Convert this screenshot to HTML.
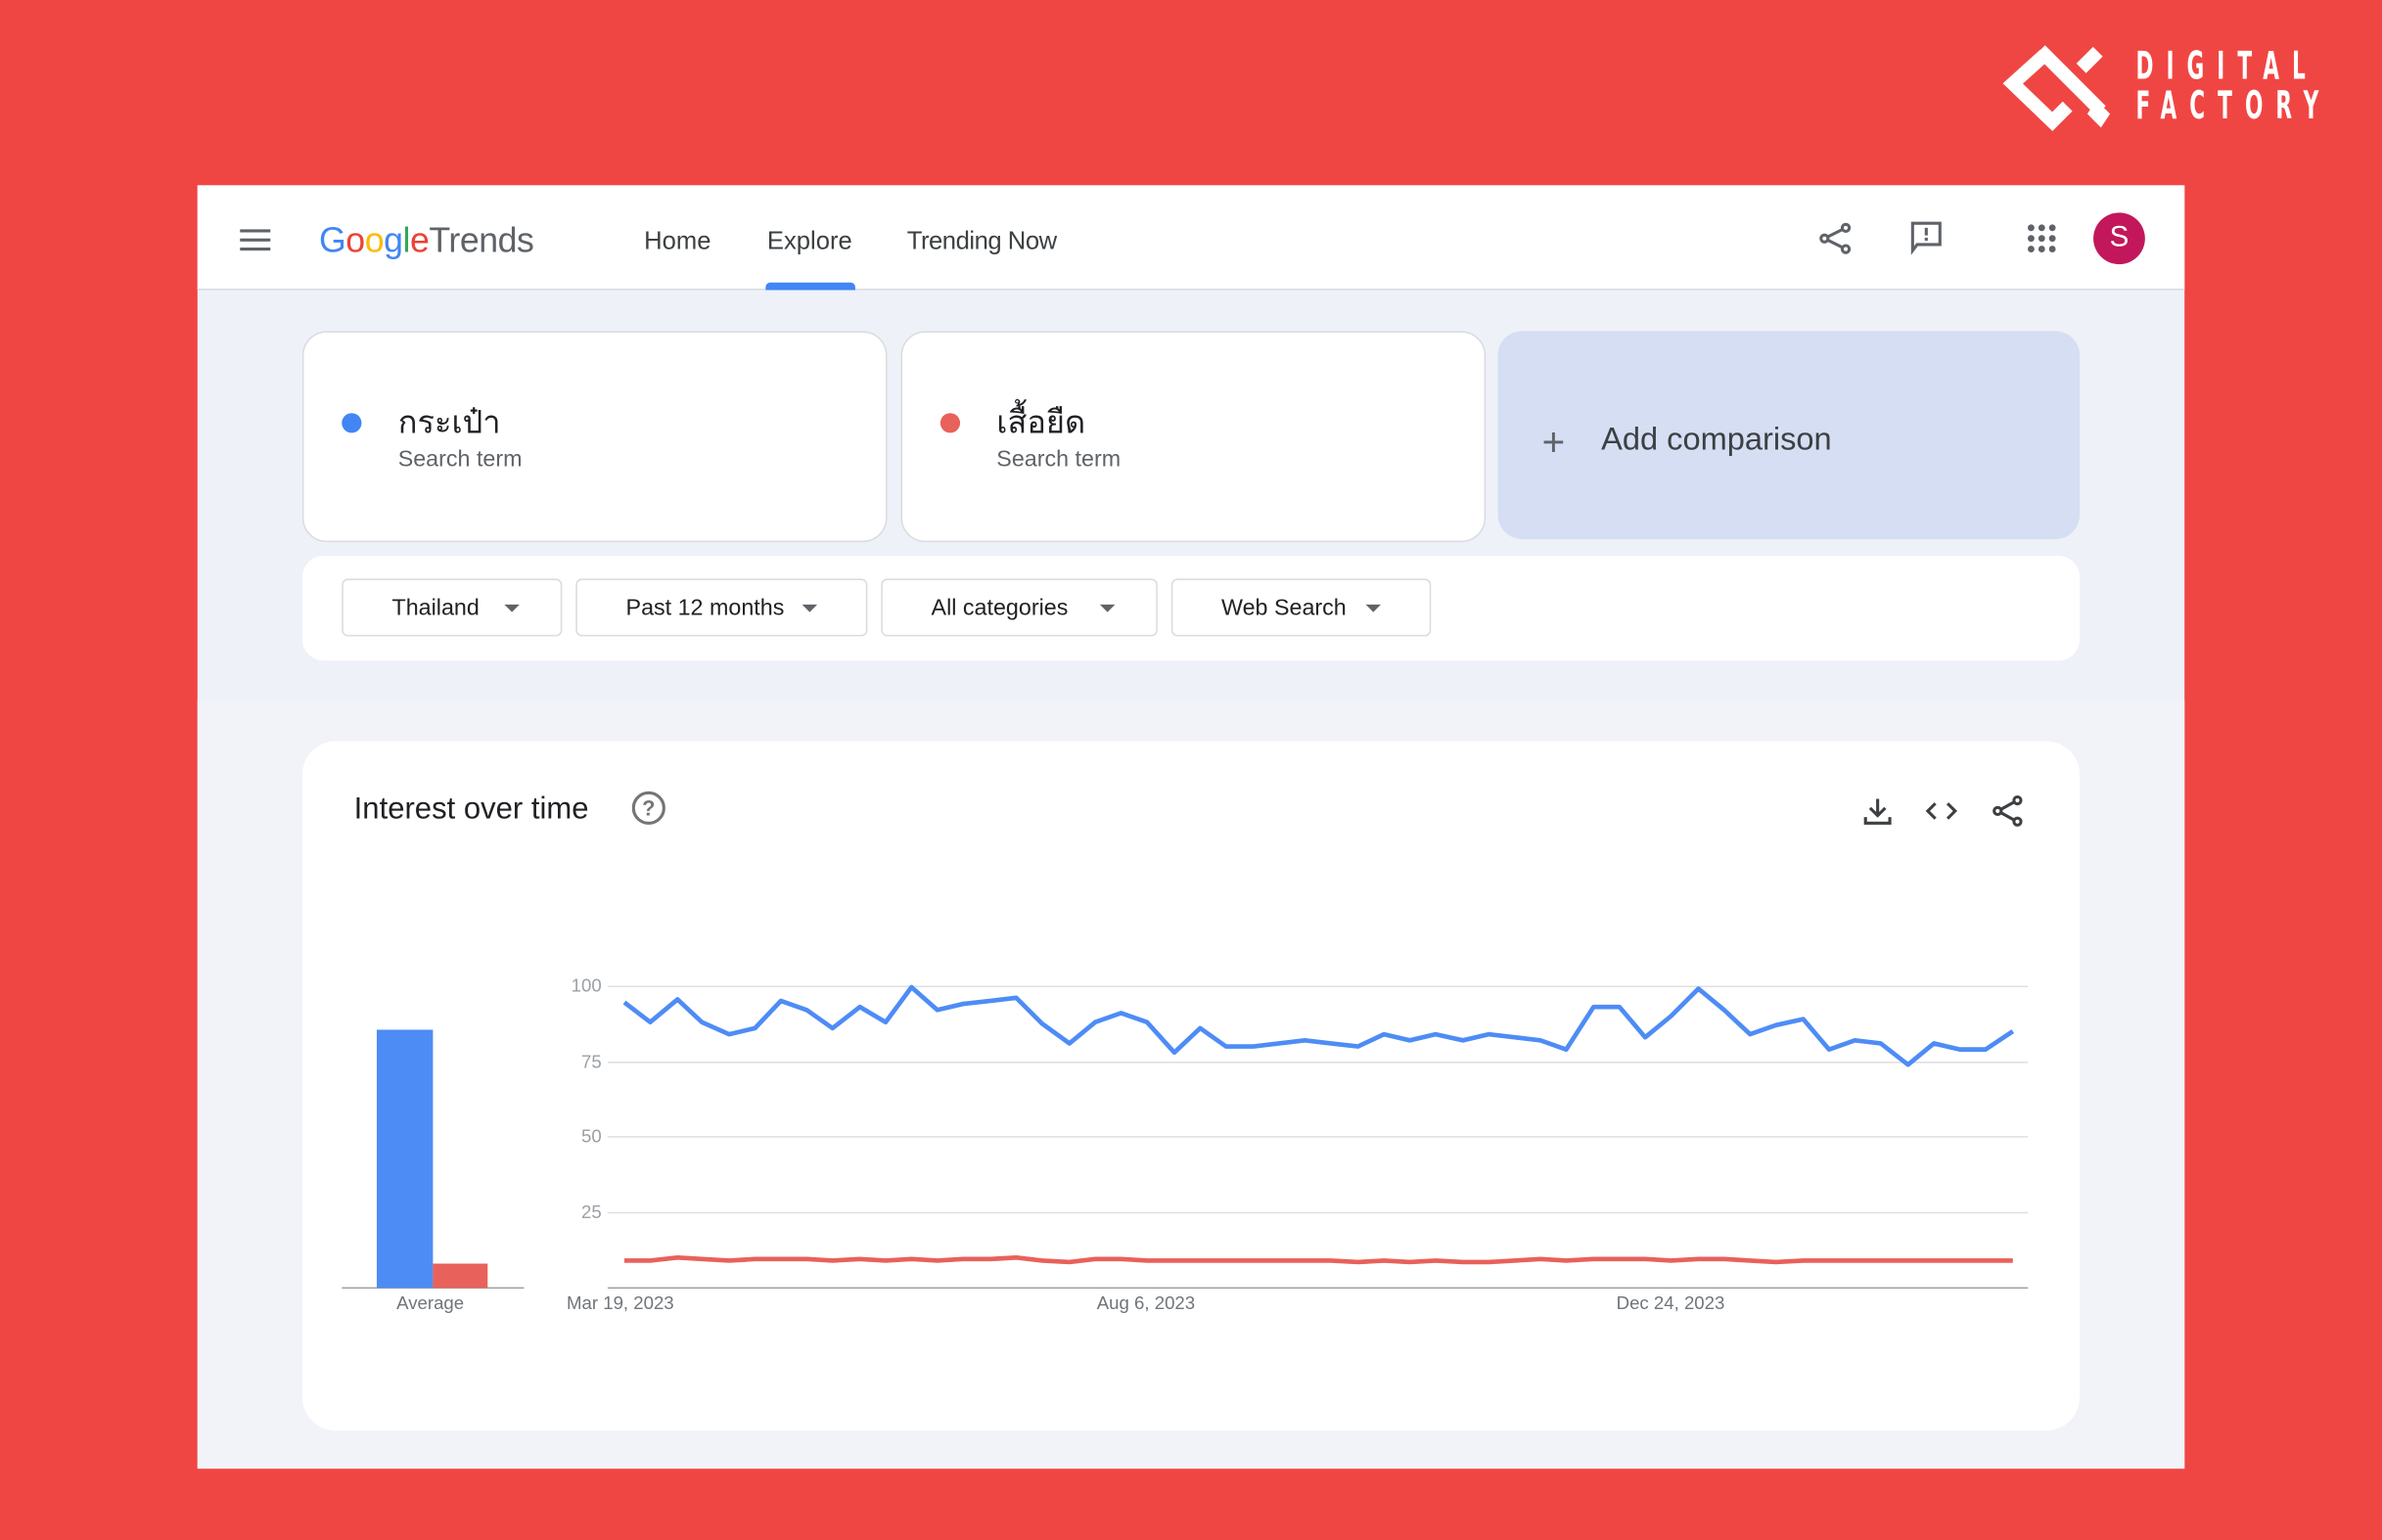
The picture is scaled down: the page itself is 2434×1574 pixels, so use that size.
<!DOCTYPE html>
<html><head><meta charset="utf-8"><style>
html,body{margin:0;padding:0;width:2434px;height:1574px;overflow:hidden;background:#f04643}
#s{position:absolute;left:0;top:0;width:1568px;height:1014px;transform:scale(1.55230);transform-origin:0 0;font-family:"Liberation Sans","Noto Sans CJK SC",sans-serif}
.a{position:absolute}
.card{position:absolute;background:#fff;border-radius:16px;border:1px solid #dadce0;box-sizing:border-box}
.dd{position:absolute;top:381px;height:38px;border:1px solid #dadce0;border-radius:4px;background:#fff;box-sizing:border-box;font-size:15px;color:#202124;line-height:38px}
.dd i{position:absolute;top:16px;width:0;height:0;border-left:5px solid transparent;border-right:5px solid transparent;border-top:5px solid #5f6368}
</style></head><body><div id="s">
<svg class="a" style="left:1310px;top:24px" width="86" height="66" viewBox="1310 24 86 66">
<g fill="none" stroke="#fff" stroke-width="9" stroke-linejoin="miter" stroke-linecap="butt">
<polyline points="1346,36 1325,55 1351,80 1361,70"/>
<line x1="1343" y1="33" x2="1383" y2="73"/>
<line x1="1370" y1="45" x2="1381" y2="34"/>
</g>
<path d="M1380 66 L1389 75 L1383 84 L1374 75 Z" fill="#fff"/>
</svg>
<div class="a" style="left:1406px;top:31px;color:#fff;font-size:25px;letter-spacing:13.5px;line-height:26px;font-family:'DejaVu Sans Condensed','Liberation Sans',sans-serif;font-weight:bold;transform:scaleX(0.62);transform-origin:0 0;width:300px">DIGITAL<br>FACTORY</div>
<div class="a" style="left:130px;top:122px;width:1308px;height:845px;background:#eef1f8"></div>
<div class="a" style="left:130px;top:461px;width:1308px;height:506px;background:#f1f3f9"></div>
<div class="a" style="left:130px;top:122px;width:1308px;height:68px;background:#fff;border-bottom:1px solid #dadce0"></div>
<div class="a" style="left:158px;top:151px;width:20px;height:2px;background:#5f6368;box-shadow:0 6px 0 #5f6368,0 12px 0 #5f6368"></div>
<div class="a" style="left:210px;top:145px;font-size:23px;letter-spacing:-0.3px"><span style="color:#4285f4">G</span><span style="color:#ea4335">o</span><span style="color:#fbbc05">o</span><span style="color:#4285f4">g</span><span style="color:#34a853">l</span><span style="color:#ea4335">e</span><span style="color:#5f6368">Trends</span></div>
<div class="a" style="left:424px;top:150px;font-size:16.5px;color:#3c4043">Home</div>
<div class="a" style="left:505px;top:150px;font-size:16.5px;color:#3c4043">Explore</div>
<div class="a" style="left:504px;top:186px;width:59px;height:5px;background:#4285f4;border-radius:3px 3px 0 0"></div>
<div class="a" style="left:597px;top:150px;font-size:16.5px;color:#3c4043;letter-spacing:-0.3px">Trending Now</div>
<svg class="a" style="left:1196px;top:145px" width="24" height="24" viewBox="0 0 24 24" fill="none" stroke="#5f6368" stroke-width="2"><circle cx="19" cy="5" r="2.3"/><circle cx="5" cy="12" r="2.3"/><circle cx="19" cy="19" r="2.3"/><path d="M7 11 L17 6 M7 13 L17 18"/></svg>
<svg class="a" style="left:1256px;top:144px" width="24" height="24" viewBox="0 0 24 24"><path d="M3 3 H21 V17 H6 L3 21 Z" fill="none" stroke="#5f6368" stroke-width="2"/><rect x="11" y="6" width="2" height="5" fill="#5f6368"/><rect x="11" y="12.5" width="2" height="2" fill="#5f6368"/></svg>
<svg class="a" style="left:1333px;top:146px" width="22" height="22" viewBox="0 0 22 22" fill="#5f6368"><circle cx="4" cy="4" r="2.2"/><circle cx="11" cy="4" r="2.2"/><circle cx="18" cy="4" r="2.2"/><circle cx="4" cy="11" r="2.2"/><circle cx="11" cy="11" r="2.2"/><circle cx="18" cy="11" r="2.2"/><circle cx="4" cy="18" r="2.2"/><circle cx="11" cy="18" r="2.2"/><circle cx="18" cy="18" r="2.2"/></svg>
<div class="a" style="left:1378px;top:140px;width:34px;height:34px;border-radius:50%;background:#c2185b;color:#fff;font-size:19px;text-align:center;line-height:34px">S</div>
<div class="card" style="left:199px;top:218px;width:385px;height:139px"></div>
<div class="a" style="left:225px;top:272px;width:13px;height:13px;border-radius:50%;background:#4285f4"></div>
<div class="a" style="left:262px;top:262px;font-size:21px;color:#202124">กระเป๋า</div>
<div class="a" style="left:262px;top:294px;font-size:15px;color:#5f6368">Search term</div>
<div class="card" style="left:593px;top:218px;width:385px;height:139px"></div>
<div class="a" style="left:619px;top:272px;width:13px;height:13px;border-radius:50%;background:#e8615a"></div>
<div class="a" style="left:656px;top:262px;font-size:21px;color:#202124">เสื้อยืด</div>
<div class="a" style="left:656px;top:294px;font-size:15px;color:#5f6368">Search term</div>
<div class="a" style="left:986px;top:218px;width:383px;height:137px;border-radius:16px;background:#d5def2"></div>
<div class="a" style="left:1015px;top:276px;font-size:26px;color:#5f6368;font-weight:300">+</div>
<div class="a" style="left:1054px;top:278px;font-size:21px;color:#3c4043">Add comparison</div>
<div class="a" style="left:199px;top:366px;width:1170px;height:69px;background:#fff;border-radius:14px"></div>
<div class="dd" style="left:225px;width:145px"><span style="margin-left:32px">Thailand</span><i style="left:106px"></i></div>
<div class="dd" style="left:379px;width:192px"><span style="margin-left:32px">Past 12 months</span><i style="left:148px"></i></div>
<div class="dd" style="left:580px;width:182px"><span style="margin-left:32px">All categories</span><i style="left:143px"></i></div>
<div class="dd" style="left:771px;width:171px"><span style="margin-left:32px">Web Search</span><i style="left:127px"></i></div>
<div class="a" style="left:199px;top:488px;width:1170px;height:454px;background:#fff;border-radius:22px"></div>
<div class="a" style="left:233px;top:522px;font-size:20px;color:#202124">Interest over time</div>
<div class="a" style="left:416px;top:521px;width:18px;height:18px;border:2px solid #757575;border-radius:50%;font-size:14px;color:#757575;text-align:center;line-height:18px;font-weight:bold">?</div>
<svg class="a" style="left:1224px;top:522px" width="110" height="24" viewBox="0 0 110 24" fill="none" stroke="#3c4043" stroke-width="2"><path d="M12 4 V15 M7 10 L12 15 L17 10 M4 16 V20 H20 V16"/><path d="M50 7 L45 12 L50 17 M58 7 L63 12 L58 17"/><circle cx="104" cy="5" r="2.3"/><circle cx="91" cy="12" r="2.3"/><circle cx="104" cy="19" r="2.3"/><path d="M93 11 L102 6 M93 13 L102 18"/></svg>
<svg class="a" style="left:0;top:0" width="1568" height="1014">
<g stroke="#e0e0e0" stroke-width="1"><line x1="400" y1="649.5" x2="1335" y2="649.5"/><line x1="400" y1="699.5" x2="1335" y2="699.5"/><line x1="400" y1="748.5" x2="1335" y2="748.5"/><line x1="400" y1="798.5" x2="1335" y2="798.5"/></g>
<line x1="400" y1="848" x2="1335" y2="848" stroke="#9e9e9e"/>
<line x1="225" y1="848" x2="345" y2="848" stroke="#9e9e9e"/>
<rect x="248" y="678" width="37" height="170" fill="#4e8cf5"/>
<rect x="285" y="832" width="36" height="16" fill="#e8615a"/>
<polyline fill="none" stroke="#4e8cf5" stroke-width="3" stroke-linejoin="round" points="411,660 428,673 446,658 462,673 480,681 497,677 514,659 531,665 548,677 566,663 583,673 600,650 617,665 634,661 652,659 669,657 686,674 704,687 721,673 738,667 755,673 773,693 790,677 807,689 825,689 842,687 859,685 876,687 894,689 911,681 928,685 945,681 963,685 980,681 997,683 1014,685 1031,691 1049,663 1066,663 1083,683 1100,669 1118,651 1135,665 1152,681 1169,675 1187,671 1204,691 1221,685 1238,687 1256,701 1273,687 1290,691 1307,691 1325,679"/>
<polyline fill="none" stroke="#e8615a" stroke-width="3" points="411,830 428,830 446,828 462,829 480,830 497,829 514,829 531,829 548,830 566,829 583,830 600,829 617,830 634,829 652,829 669,828 686,830 704,831 721,829 738,829 755,830 773,830 790,830 807,830 825,830 842,830 859,830 876,830 894,831 911,830 928,831 945,830 963,831 980,831 997,830 1014,829 1031,830 1049,829 1066,829 1083,829 1100,830 1118,829 1135,829 1152,830 1169,831 1187,830 1204,830 1221,830 1238,830 1256,830 1273,830 1290,830 1307,830 1325,830"/>
<g font-family="Liberation Sans" font-size="12" fill="#9aa0a6" text-anchor="end"><text x="396" y="653">100</text><text x="396" y="703">75</text><text x="396" y="752">50</text><text x="396" y="802">25</text></g>
<g font-family="Liberation Sans" font-size="12" fill="#70757a"><text x="261" y="862">Average</text><text x="373" y="862">Mar 19, 2023</text><text x="722" y="862">Aug 6, 2023</text><text x="1064" y="862">Dec 24, 2023</text></g>
</svg>
</div></body></html>
